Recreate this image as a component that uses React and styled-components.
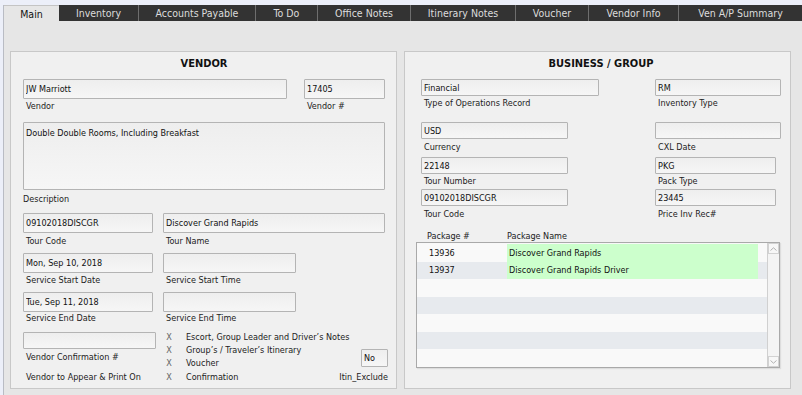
import React from "react";
import styled, { createGlobalStyle } from "styled-components";

const font = `"DejaVu Sans Condensed", "DejaVu Sans", Verdana, sans-serif`;

const GlobalStyle = createGlobalStyle`
  html, body {
    margin: 0;
    background: #eceff9;
    font-family: ${font};
  }
  * {
    box-sizing: border-box;
  }
`;

const Page = styled.div`
  height: 100vh;
  padding: 5px 0 0 3px;
  display: flex;
  flex-direction: column;
`;

const Frame = styled.div`
  flex: 1;
  display: flex;
  flex-direction: column;
  border-left: 1px solid #b9bcc4;
  background: #e6e6e6;
`;

const TabBar = styled.div`
  display: flex;
  height: 16px;
  background: #333;
`;

const Tab = styled.div`
  width: ${(p) => p.$w}px;
  flex: none;
  font-size: 10.5px;
  line-height: 16px;
  text-align: center;
  color: ${(p) => (p.$active ? "#111" : "#dcdcdc")};
  background: ${(p) => (p.$active ? "#e6e6e6" : "#333")};
  border-top: ${(p) => (p.$active ? "1px solid #c4c4c4" : "none")};
  border-right: ${(p) => (p.$active ? "none" : "1px solid #6e6e6e")};
  &:last-child {
    border-right: none;
    flex: 1;
  }
`;

const Content = styled.div`
  display: flex;
  gap: 7px;
  padding: 30px 0 0 6px;
`;

const Panel = styled.section`
  width: 387px;
  height: 338px;
  border: 1px solid #c8c8c8;
  background: #f0f0f0;
  padding: ${(p) => p.$pad};
`;

const Title = styled.h2`
  margin: 0;
  text-align: center;
  font-size: 11px;
  font-weight: bold;
  line-height: 14px;
  color: #111;
`;

const Row = styled.div`
  display: flex;
  justify-content: ${(p) => p.$justify || "flex-start"};
  gap: ${(p) => p.$gap || 0}px;
  margin-top: ${(p) => p.$mt}px;
`;

const BizRow = styled.div`
  display: grid;
  grid-template-columns: 1fr 126px;
  margin-top: ${(p) => p.$mt}px;
`;

const Field = styled.div`
  display: flex;
  flex-direction: column;
  width: ${(p) => (p.$w ? `${p.$w}px` : "auto")};
  margin-top: ${(p) => p.$mt || 0}px;
  gap: ${(p) => (p.$gap === undefined ? 1 : p.$gap)}px;
`;

const Input = styled.input`
  width: 100%;
  height: ${(p) => p.$h || 20}px;
  margin: 0;
  padding: 0 2px;
  border: 1px solid #b4b4b4;
  border-radius: 1px;
  background: linear-gradient(#eeeeee, #f6f6f6);
  font-family: ${font};
  font-size: 9px;
  color: #111;
  outline: none;
`;

const TextArea = styled.textarea`
  width: 100%;
  height: 68px;
  margin: 0;
  padding: 4px 2px;
  border: 1px solid #b4b4b4;
  border-radius: 1px;
  background: linear-gradient(#eeeeee, #f6f6f6);
  font-family: ${font};
  font-size: 9px;
  line-height: 12px;
  color: #111;
  resize: none;
  outline: none;
`;

const Label = styled.div`
  font-size: 9px;
  line-height: 12px;
  color: #222;
  padding-left: ${(p) => (p.$indent === undefined ? 3 : p.$indent)}px;
  margin-top: ${(p) => p.$mt || 0}px;
  white-space: nowrap;
`;

const Bottom = styled.div`
  display: grid;
  grid-template-columns: 133px minmax(0, 1fr) auto;
  margin-top: 8px;
  margin-right: -3px;
`;

const Column = styled.div`
  display: flex;
  flex-direction: column;
  align-items: ${(p) => p.$align || "stretch"};
  margin-top: ${(p) => p.$mt || 0}px;
  padding-left: ${(p) => p.$pl || 0}px;
`;

const CheckRow = styled.div`
  display: flex;
  align-items: center;
  height: 13.4px;
  font-size: 9px;
  color: #222;
  gap: 12px;
  white-space: nowrap;
`;

const CheckBox = styled.span`
  width: 10px;
  height: 10px;
  flex: none;
  color: #666;
  font-size: 9px;
  line-height: 10px;
  text-align: center;
`;

const TableHead = styled.div`
  display: grid;
  grid-template-columns: 80px 1fr;
  margin: 10px 0 0 -5px;
  padding-left: 11px;
  font-size: 9px;
  line-height: 12px;
  color: #222;
`;

const Table = styled.div`
  display: flex;
  width: 364px;
  height: 126px;
  margin-left: -5px;
  border: 1px solid #a9a9a9;
  background: #f8f8f8;
  box-shadow: 1px 1px 1px rgba(0, 0, 0, 0.08);
`;

const Rows = styled.div`
  flex: 1;
  display: grid;
  grid-template-rows: repeat(7, 1fr);
  padding-top: 1px;
`;

const TableRow = styled.div`
  display: grid;
  grid-template-columns: 90px 251px 1fr;
  background: ${(p) => (p.$odd ? "#e7eaee" : "#f9f9f9")};
  font-size: 9px;
  color: #111;
`;

const Cell = styled.div`
  display: flex;
  align-items: center;
  padding-left: ${(p) => p.$pl || 0}px;
  background: ${(p) => (p.$green ? "#ccffcc" : "transparent")};
`;

const ScrollBar = styled.div`
  width: 12px;
  display: flex;
  flex-direction: column;
  justify-content: space-between;
  border-left: 1px solid #d0d0d0;
  background: #f4f4f4;
`;

const ScrollButton = styled.div`
  height: 11px;
  display: flex;
  align-items: center;
  justify-content: center;
  border: 1px solid #d2d2d2;
  background: #f7f7f7;
`;

const tabs = [
  ["Main", 55],
  ["Inventory", 80],
  ["Accounts Payable", 117],
  ["To Do", 62],
  ["Office Notes", 93],
  ["Itinerary Notes", 105],
  ["Voucher", 73],
  ["Vendor Info", 90],
  ["Ven A/P Summary", 123],
];

const packages = [
  ["13936", "Discover Grand Rapids"],
  ["13937", "Discover Grand Rapids Driver"],
  null,
  null,
  null,
  null,
  null,
];

const printOn = [
  "Escort, Group Leader and Driver’s Notes",
  "Group’s / Traveler’s Itinerary",
  "Voucher",
  "Confirmation",
];

function Chevron({ up }) {
  return (
    <svg width="7" height="4" viewBox="0 0 7 4">
      <path
        d={up ? "M0.5 3.5 L3.5 0.8 L6.5 3.5" : "M0.5 0.5 L3.5 3.2 L6.5 0.5"}
        fill="none"
        stroke="#b0b0b0"
        strokeWidth="1"
      />
    </svg>
  );
}

function TextField({ w, h, value, label, gap, indent }) {
  return (
    <Field $w={w} $gap={gap}>
      <Input $h={h} readOnly value={value} />
      <Label $indent={indent}>{label}</Label>
    </Field>
  );
}

export default function App() {
  return (
    <>
      <GlobalStyle />
      <Page>
        <Frame>
          <TabBar>
            {tabs.map(([name, w], i) => (
              <Tab key={name} $w={w} $active={i === 0}>
                {name}
              </Tab>
            ))}
          </TabBar>

          <Content>
            <Panel $pad="5px 11px 0 12px">
              <Title>VENDOR</Title>
              <Row $mt={8} $justify="space-between">
                <TextField w={264} value="JW Marriott" label="Vendor" />
                <TextField w={81} value="17405" label="Vendor #" />
              </Row>
              <Field $gap={3} $mt={10}>
                <TextArea readOnly value="Double Double Rooms, Including Breakfast" />
                <Label $indent={0}>Description</Label>
              </Field>
              <Row $mt={8} $gap={10}>
                <TextField w={130} value="09102018DISCGR" label="Tour Code" gap={2} />
                <TextField w={222} value="Discover Grand Rapids" label="Tour Name" gap={2} />
              </Row>
              <Row $mt={6} $gap={10}>
                <TextField w={130} value="Mon, Sep 10, 2018" label="Service Start Date" />
                <TextField w={133} value="" label="Service Start Time" />
              </Row>
              <Row $mt={6} $gap={10}>
                <TextField w={130} value="Tue, Sep 11, 2018" label="Service End Date" gap={0} />
                <TextField w={133} value="" label="Service End Time" gap={0} />
              </Row>
              <Bottom>
                <Column>
                  <Input $h={17} readOnly value="" />
                  <Label $mt={2}>Vendor Confirmation #</Label>
                  <Label $mt={8}>Vendor to Appear &amp; Print On</Label>
                </Column>
                <Column $mt={-2} $pl={8}>
                  {printOn.map((t) => (
                    <CheckRow key={t}>
                      <CheckBox>X</CheckBox>
                      {t}
                    </CheckRow>
                  ))}
                </Column>
                <Column $mt={17} $align="flex-end">
                  <Field $w={27}>
                    <Input $h={18} readOnly value="No" />
                  </Field>
                  <Label $mt={4} $indent={0}>
                    Itin_Exclude
                  </Label>
                </Column>
              </Bottom>
            </Panel>

            <Panel $pad="5px 9px 0 16px">
              <Title>BUSINESS / GROUP</Title>
              <BizRow $mt={8}>
                <TextField w={178} h={17} value="Financial" label="Type of Operations Record" />
                <TextField w={126} h={17} value="RM" label="Inventory Type" />
              </BizRow>
              <BizRow $mt={13}>
                <TextField w={147} h={17} value="USD" label="Currency" gap={2} />
                <TextField w={126} h={17} value="" label="CXL Date" gap={2} />
              </BizRow>
              <BizRow $mt={4}>
                <TextField w={147} h={17} value="22148" label="Tour Number" />
                <TextField w={121} h={17} value="PKG" label="Pack Type" />
              </BizRow>
              <BizRow $mt={2}>
                <TextField w={147} h={17} value="09102018DISCGR" label="Tour Code" gap={2} />
                <TextField w={121} h={17} value="23445" label="Price Inv Rec#" gap={2} />
              </BizRow>
              <TableHead>
                <span>Package #</span>
                <span>Package Name</span>
              </TableHead>
              <Table>
                <Rows>
                  {packages.map((p, i) => (
                    <TableRow key={i} $odd={i % 2 === 1}>
                      <Cell $pl={12}>{p ? p[0] : ""}</Cell>
                      <Cell $pl={2} $green={!!p}>
                        {p ? p[1] : ""}
                      </Cell>
                      <Cell />
                    </TableRow>
                  ))}
                </Rows>
                <ScrollBar>
                  <ScrollButton>
                    <Chevron up />
                  </ScrollButton>
                  <ScrollButton>
                    <Chevron />
                  </ScrollButton>
                </ScrollBar>
              </Table>
            </Panel>
          </Content>
        </Frame>
      </Page>
    </>
  );
}
